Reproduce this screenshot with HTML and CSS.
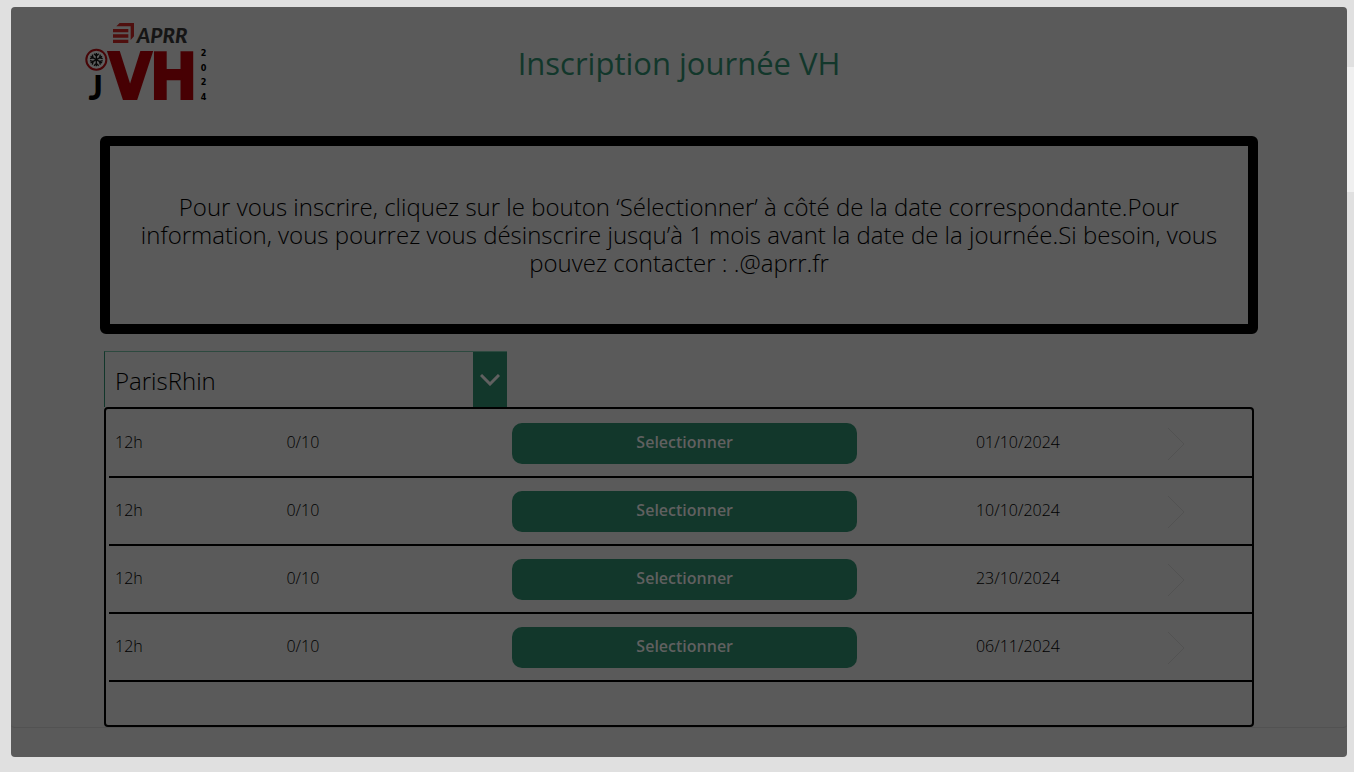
FILE: index.html
```html
<!DOCTYPE html>
<html lang="fr">
<head>
<meta charset="utf-8">
<title>Inscription journée VH</title>
<link rel="stylesheet" href="styles.css">
</head>
<body>
<main class="screen">
  <div class="content">
    <header class="header">
      <svg class="logo" viewBox="42 30 375 255" role="img" aria-label="APRR journée VH 2024">
        <g fill="#4f0f0e">
          <path d="M142 49 152 39H195V79L185 90V49Z"/>
          <path d="M132 57H178V67H132ZM132 73H178V83H132ZM132 89H178V99H132Z"/>
        </g>
        <text class="logo-brand" x="203" y="98">APRR</text>
        <circle cx="82" cy="149" r="30" fill="#5e5e5e" stroke="#470507" stroke-width="6"/>
        <g stroke="#080808" stroke-width="4" fill="none">
          <path id="arm" d="M82 149V129M75 131 82 138 89 131"/>
          <use href="#arm" transform="rotate(60 82 149)"/>
          <use href="#arm" transform="rotate(120 82 149)"/>
          <use href="#arm" transform="rotate(180 82 149)"/>
          <use href="#arm" transform="rotate(240 82 149)"/>
          <use href="#arm" transform="rotate(300 82 149)"/>
        </g>
        <text class="logo-j" x="80" y="269">J</text>
        <text class="logo-vh" x="183" y="267">V</text>
        <text class="logo-vh" x="314" y="267">H</text>
        <g class="logo-year">
          <text x="404" y="138">2</text>
          <text x="404" y="182">0</text>
          <text x="404" y="226">2</text>
          <text x="404" y="270">4</text>
        </g>
      </svg>
      <h1 class="title">Inscription journée VH</h1>
    </header>

    <p class="notice">Pour vous inscrire, cliquez sur le bouton ‘Sélectionner’ à côté de la date correspondante.Pour information, vous pourrez vous désinscrire jusqu’à 1 mois avant la date de la journée.Si besoin, vous pouvez contacter : .@aprr.fr</p>

    <section class="sessions">
      <div class="picker">
        <select class="picker-select" aria-label="Région">
          <option>ParisRhin</option>
        </select>
        <span class="picker-arrow">
          <svg width="20" height="12" viewBox="0 0 20 12"><path d="M1 1 10 10 19 1" fill="none" stroke="#606060" stroke-width="3"/></svg>
        </span>
      </div>
      <div class="list">
        <table class="table" aria-label="Journées disponibles">
          <colgroup><col class="col-hour"><col class="col-places"><col class="col-action"><col class="col-date"><col class="col-open"></colgroup>
          <tbody>
            <tr><td>12h</td><td>0/10</td><td class="action"><button class="select-button" type="button">Selectionner</button></td><td class="date">01/10/2024</td><td class="open"><button class="next" type="button" aria-label="Ouvrir 01/10/2024"><svg width="18" height="34" viewBox="0 0 18 34"><path d="M1 1 17 17 1 33"/></svg></button></td></tr>
            <tr><td>12h</td><td>0/10</td><td class="action"><button class="select-button" type="button">Selectionner</button></td><td class="date">10/10/2024</td><td class="open"><button class="next" type="button" aria-label="Ouvrir 10/10/2024"><svg width="18" height="34" viewBox="0 0 18 34"><path d="M1 1 17 17 1 33"/></svg></button></td></tr>
            <tr><td>12h</td><td>0/10</td><td class="action"><button class="select-button" type="button">Selectionner</button></td><td class="date">23/10/2024</td><td class="open"><button class="next" type="button" aria-label="Ouvrir 23/10/2024"><svg width="18" height="34" viewBox="0 0 18 34"><path d="M1 1 17 17 1 33"/></svg></button></td></tr>
            <tr><td>12h</td><td>0/10</td><td class="action"><button class="select-button" type="button">Selectionner</button></td><td class="date">06/11/2024</td><td class="open"><button class="next" type="button" aria-label="Ouvrir 06/11/2024"><svg width="18" height="34" viewBox="0 0 18 34"><path d="M1 1 17 17 1 33"/></svg></button></td></tr>
          </tbody>
        </table>
      </div>
    </section>
  </div>
</main>
<div class="side-tab"></div>
</body>
</html>
```
FILE: styles.css
```css
* {
  box-sizing: border-box;
}

body {
  margin: 0;
  min-height: 100vh;
  padding: 7px 7px 15px 11px;
  display: flex;
  background: #e0e0e0;
  color: #000;
  font-family: "Open Sans", "Noto Sans", sans-serif;
  font-size: 16px;
  font-weight: 300;
}

button,
select {
  font: inherit;
  color: inherit;
}

.screen {
  flex: 1;
  min-width: 0;
  background: #5a5a5a;
  border-radius: 4px;
}

.content {
  border-bottom: 1px solid #525252;
  border-radius: 4px;
}

.header {
  display: grid;
  grid-template-columns: 1fr auto 1fr;
  align-items: center;
  height: 111px;
  padding: 0 72px;
}

.logo {
  width: 125px;
  height: 85px;
  overflow: visible;
}

.logo-brand {
  font: italic 900 62px Lato, sans-serif;
  fill: #151515;
}

.logo-j,
.logo-vh,
.logo-year {
  font-family: "DejaVu Sans Condensed", "DejaVu Sans", sans-serif;
  font-stretch: condensed;
  font-weight: 700;
  text-anchor: middle;
}

.logo-j {
  font-family: Lato, sans-serif;
  font-size: 100px;
  font-weight: 900;
  fill: #000;
}

.logo-vh {
  font-size: 190px;
  fill: #470003;
  stroke: #470003;
  stroke-width: 6px;
}

.logo-year {
  font-size: 27px;
  fill: #000;
}

.title {
  margin: 0;
  color: #12372b;
  font-size: 31px;
  font-weight: 400;
  line-height: 44px;
}

.notice {
  display: flex;
  align-items: center;
  min-height: 198px;
  margin: 18px 89px 17px;
  padding: 0 10px;
  border: 10px solid #000;
  border-radius: 6px;
  font-size: 24px;
  line-height: 28px;
  text-align: center;
}

.sessions {
  padding: 0 93px;
}

.picker {
  display: flex;
  width: 35%;
  height: 56px;
  border-top: 1px solid #2d493f;
  border-left: 1px solid #12372b;
}

.picker-select {
  flex: 1;
  appearance: none;
  padding: 2px 10px 0;
  border: 0;
  background: transparent;
  font-size: 24px;
}

.picker-arrow {
  display: flex;
  align-items: center;
  justify-content: center;
  width: 34px;
  background: #12372b;
}

.list {
  min-height: 320px;
  padding: 1px 0 0 3px;
  border: 2px solid #000;
  border-radius: 4px;
}

.table {
  width: 100%;
  table-layout: fixed;
  border-collapse: separate;
  border-spacing: 0;
}

.col-hour { width: 15%; }
.col-places { width: 20%; }
.col-action { width: 31%; }
.col-date { width: 26%; }
.col-open { width: 8%; }

.table td {
  height: 68px;
  padding: 0 0 2px 6px;
  border-bottom: 2px solid #000;
}

.table .action {
  padding: 0 6px 0 3px;
}

.table .date {
  padding-left: 12px;
  text-align: center;
}

.table .open {
  padding: 6px 0 0 6px;
}

.select-button {
  display: block;
  width: 100%;
  height: 41px;
  padding: 0 0 2px;
  border: 0;
  border-radius: 10px;
  background: #12372b;
  color: #606060;
  font-weight: 600;
}

.next {
  display: block;
  padding: 0;
  border: 0;
  background: none;
}

.next path {
  fill: none;
  stroke: #525252;
  stroke-width: 1px;
}

.side-tab {
  position: absolute;
  top: 67px;
  right: 0;
  width: 7px;
  height: 125px;
  background: #f0f0f0;
}
```
